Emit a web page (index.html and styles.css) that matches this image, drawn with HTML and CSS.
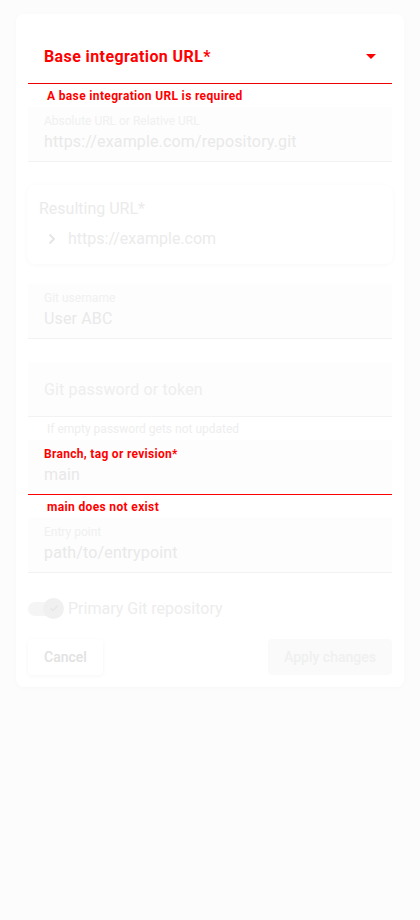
FILE: index.html
```html
<!DOCTYPE html>
<html>
<head>
<meta charset="utf-8">
<link rel="stylesheet" href="styles.css">
</head>
<body>
<div class="card">
  <div class="field select">
    <span class="select-text">Base integration URL*</span>
    <svg class="arrow" width="10" height="5" viewBox="0 0 10 5"><path d="M0 0h10L5 5z" fill="#ff0000"/></svg>
  </div>
  <div class="helper error">A base integration URL is required</div>

  <div class="field">
    <div class="label">Absolute URL or Relative URL</div>
    <div class="value">https://example.com/repository.git</div>
  </div>
  <div class="helper"></div>

  <div class="result">
    <div class="result-title">Resulting URL*</div>
    <div class="result-row">
      <svg class="chev" width="8" height="12" viewBox="0 0 8 12"><path d="M1.5 1.5l4.5 4.5-4.5 4.5" fill="none" stroke="#e4e4e4" stroke-width="1.8"/></svg>
      <span>https://example.com</span>
    </div>
  </div>

  <div class="field">
    <div class="label">Git username</div>
    <div class="value">User ABC</div>
  </div>
  <div class="helper"></div>

  <div class="field nolabel">
    <div class="placeholder">Git password or token</div>
  </div>
  <div class="helper">If empty password gets not updated</div>

  <div class="field err">
    <div class="label err-label">Branch, tag or revision*</div>
    <div class="value">main</div>
  </div>
  <div class="helper error">main does not exist</div>

  <div class="field">
    <div class="label">Entry point</div>
    <div class="value">path/to/entrypoint</div>
  </div>
  <div class="helper"></div>

  <div class="toggle-row">
    <div class="toggle">
      <div class="track"></div>
      <div class="thumb">
        <svg width="12" height="12" viewBox="0 0 12 12"><path d="M2.5 6.2l2.3 2.3 4.7-4.8" fill="none" stroke="#e6e6e6" stroke-width="1.4"/></svg>
      </div>
    </div>
    <span class="toggle-label">Primary Git repository</span>
  </div>

  <div class="actions">
    <button class="btn cancel">Cancel</button>
    <button class="btn apply">Apply changes</button>
  </div>
</div>
</body>
</html>
```

FILE: styles.css
```css
* { box-sizing: border-box; }
html, body { margin: 0; padding: 0; }
body {
  background: #fcfcfc;
  font-family: Roboto, "Liberation Sans", sans-serif;
  width: 420px;
  height: 920px;
}
.card {
  margin: 14px 16px 0;
  background: #ffffff;
  border-radius: 8px;
  box-shadow: 0 1px 6px rgba(0,0,0,0.025);
  padding: 15px 12px 12px;
  display: flex;
  flex-direction: column;
}
.field {
  height: 55px;
  background: #fdfdfd;
  border-bottom: 1px solid #f2f2f2;
  padding: 0 16px;
  display: flex;
  flex-direction: column;
  position: relative;
}
.field.select {
  flex-direction: row;
  align-items: center;
  justify-content: space-between;
  background: #ffffff;
  border-bottom: 1px solid #ee0000;
  padding: 0 16px 0 16px;
}
.select-text {
  color: #ff0000;
  font-weight: 700;
  font-size: 16px;
  letter-spacing: 0.4px;
}
.arrow { margin-top: 1px; }
.field.err { border-bottom: 1px solid #ff0000; }
.label {
  font-size: 12px;
  line-height: 14px;
  color: #f0f0f0;
  margin-top: 7px;
}
.err-label {
  color: #ff0000;
  font-weight: 700;
  letter-spacing: 0.3px;
}
.value {
  font-size: 16px;
  line-height: 20px;
  color: #e9e9e9;
  margin-top: 4px;
  letter-spacing: 0.15px;
}
.field.nolabel { justify-content: center; }
.placeholder {
  font-size: 16px;
  color: #eeeeee;
  letter-spacing: 0.15px;
}
.helper {
  height: 23px;
  padding: 4px 19px 0;
  font-size: 12px;
  line-height: 16px;
  color: #eeeeee;
}
.helper.error {
  color: #ff0000;
  font-weight: 700;
  letter-spacing: 0.35px;
}
.result {
  height: 79px;
  margin: 0 -1px 20px;
  border-radius: 8px;
  background: #ffffff;
  box-shadow: 0 1px 5px rgba(0,0,0,0.03);
  padding: 14px 12px 0;
}
.result-title {
  font-size: 16px;
  line-height: 20px;
  color: #ebebeb;
}
.result-row {
  display: flex;
  align-items: center;
  margin-top: 10px;
  font-size: 16px;
  line-height: 20px;
  color: #ebebeb;
}
.chev { margin: 0 12px 0 9px; }
.toggle-row {
  height: 25px;
  display: flex;
  align-items: center;
  margin-bottom: 18px;
}
.toggle {
  position: relative;
  width: 36px;
  height: 24px;
  margin-right: 4px;
}
.track {
  position: absolute;
  left: 0;
  top: 5px;
  width: 30px;
  height: 14px;
  border-radius: 7px;
  background: #f5f5f5;
}
.thumb {
  position: absolute;
  left: 15px;
  top: 1px;
  width: 21px;
  height: 21px;
  border-radius: 50%;
  background: #f0f0f0;
  display: flex;
  align-items: center;
  justify-content: center;
}
.toggle-label {
  font-size: 16px;
  color: #ededed;
}
.actions {
  display: flex;
  justify-content: space-between;
}
.btn {
  height: 36px;
  border: none;
  border-radius: 4px;
  font-family: Roboto, "Liberation Sans", sans-serif;
  font-size: 14px;
  font-weight: 500;
  padding: 0 16px;
}
.cancel {
  background: #ffffff;
  color: #e2e2e2;
  box-shadow: 0 1px 4px rgba(0,0,0,0.04);
  width: 75px;
}
.apply {
  background: #fafafa;
  color: #f0f0f0;
  width: 124px;
}
```
